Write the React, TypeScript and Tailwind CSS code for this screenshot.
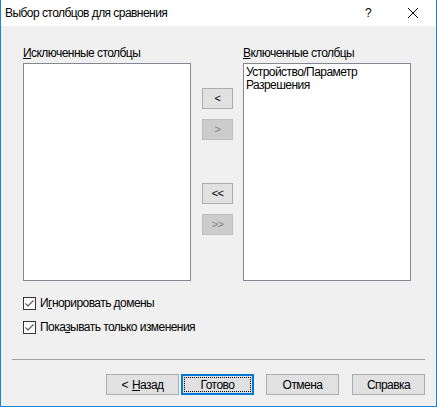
import React from "react";

const font = { fontFamily: '"Liberation Sans", "Noto Sans", sans-serif', letterSpacing: "-0.55px" };

function CheckBox({ children }: { children: React.ReactNode }) {
  return (
    <label className="flex items-center h-4 text-[12px] leading-4">
      <span className="w-[13px] h-[13px] border border-[#333333] bg-white flex items-center justify-center mr-1">
        <svg width="11" height="11" viewBox="0 0 11 11">
          <path d="M1.5 5.5 L4 8 L9.5 2.5" fill="none" stroke="#555555" strokeWidth="1.1" />
        </svg>
      </span>
      <span>{children}</span>
    </label>
  );
}

function SmallButton({ label, disabled }: { label: string; disabled?: boolean }) {
  return (
    <div
      className={
        disabled
          ? "w-[31px] h-[21px] border border-[#bfbfbf] bg-[#cccccc] text-[#838383] flex items-center justify-center text-[11px]"
          : "w-[31px] h-[21px] border border-[#adadad] bg-[#e1e1e1] text-black flex items-center justify-center text-[11px]"
      }
    >
      {label}
    </div>
  );
}

function DialogButton({ children, focused }: { children: React.ReactNode; focused?: boolean }) {
  if (focused) {
    return (
      <div className="w-[73px] h-[21px] border-2 border-[#0078d7] bg-[#e1e1e1] p-px">
        <div className="w-full h-full border border-dotted border-black flex items-center justify-center text-[12px]">
          {children}
        </div>
      </div>
    );
  }
  return (
    <div className="w-[73px] h-[21px] border border-[#adadad] bg-[#e1e1e1] flex items-center justify-center text-[12px]">
      {children}
    </div>
  );
}

export default function App() {
  return (
    <div className="w-[437px] h-[407px] bg-[#f0f0f0] border-x border-b border-[#1883d7] flex flex-col text-black" style={font}>
      {/* title bar */}
      <div className="h-[26px] bg-white flex items-center pl-1 shrink-0">
        <span className="text-[12px] flex-1">Выбор столбцов для сравнения</span>
        <span className="text-[12px] w-[10px] mr-[33px]">?</span>
        <svg width="10" height="10" viewBox="0 0 10 10" className="mr-[18px]">
          <path d="M0 0 L10 10 M10 0 L0 10" stroke="#000" strokeWidth="1" />
        </svg>
      </div>

      <div className="flex flex-col px-[22px] pt-[19px]">
        <div className="flex">
          <div className="w-[168px] flex flex-col">
            <div className="h-4 text-[12px] leading-4 mb-[2px]">
              <u>И</u>сключенные столбцы
            </div>
            <div className="h-[218px] border border-[#828790] bg-white" />
          </div>

          <div className="w-[52px] flex flex-col pl-[11px] pt-[43px]">
            <SmallButton label="<" />
            <div className="mt-[10px]">
              <SmallButton label=">" disabled />
            </div>
            <div className="mt-[43px]">
              <SmallButton label="<<" />
            </div>
            <div className="mt-[10px]">
              <SmallButton label=">>" disabled />
            </div>
          </div>

          <div className="w-[168px] flex flex-col">
            <div className="h-4 text-[12px] leading-4 mb-[2px]">
              <u>В</u>ключенные столбцы
            </div>
            <div className="h-[218px] border border-[#828790] bg-white px-[2px] pt-[2px] text-[12px] leading-[13px]">
              <div>Устройство/Параметр</div>
              <div>Разрешения</div>
            </div>
          </div>
        </div>

        <div className="flex flex-col gap-2 mt-[14px]">
          <CheckBox>
            И<u>г</u>норировать домены
          </CheckBox>
          <CheckBox>
            Пока<u>з</u>ывать только изменения
          </CheckBox>
        </div>
      </div>

      <div className="mx-[11px] mt-[24px] h-px bg-[#a0a0a0]" />

      <div className="flex justify-end pr-[11px] mt-[14px]">
        <DialogButton>
          &lt; <u className="ml-1">Н</u>азад
        </DialogButton>
        <div className="ml-[2px]">
          <DialogButton focused>Готово</DialogButton>
        </div>
        <div className="ml-[12px]">
          <DialogButton>Отмена</DialogButton>
        </div>
        <div className="ml-[13px]">
          <DialogButton>Справка</DialogButton>
        </div>
      </div>
    </div>
  );
}
